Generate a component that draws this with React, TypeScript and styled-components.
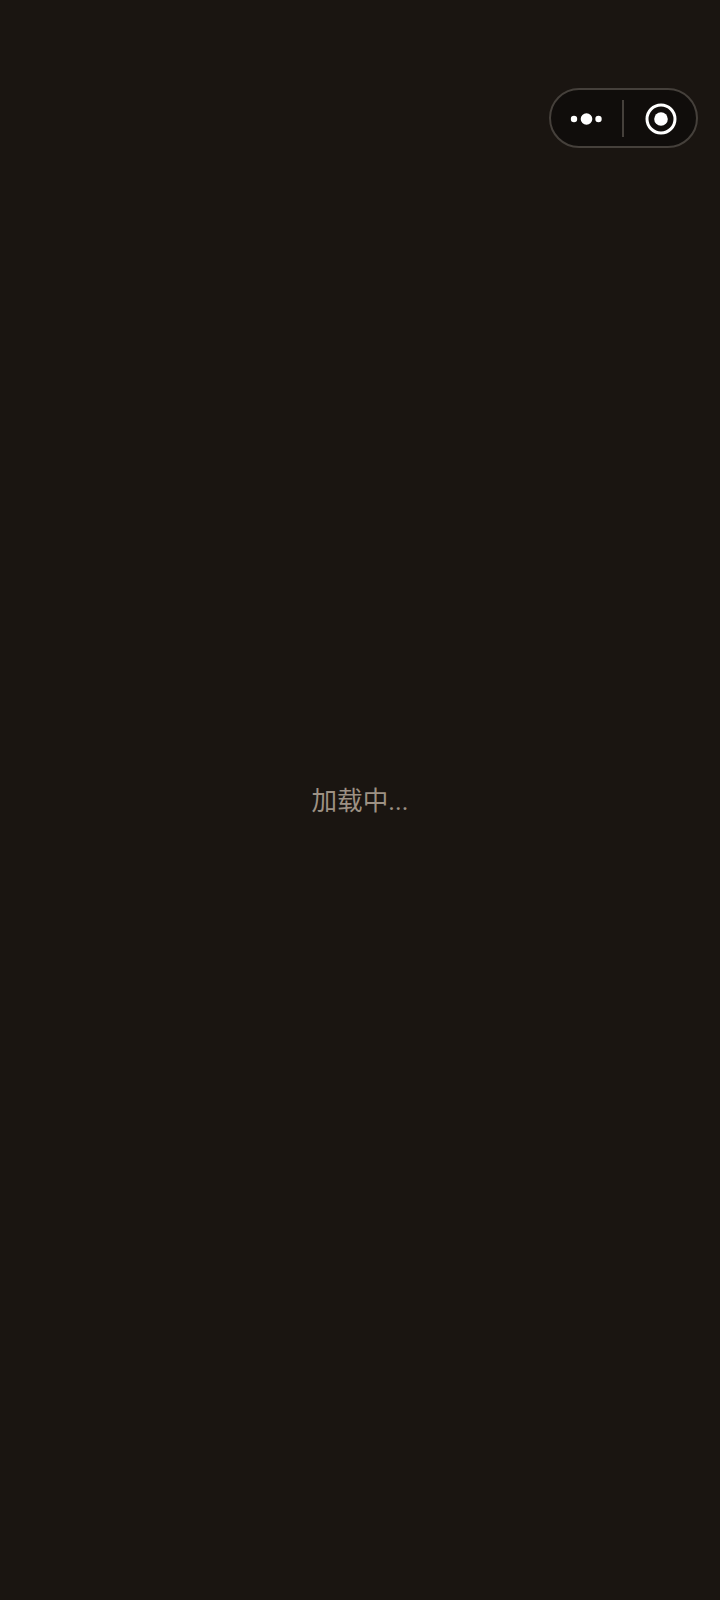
import React from "react";
import styled, { createGlobalStyle } from "styled-components";

const Global = createGlobalStyle`
  html, body { margin: 0; padding: 0; background: #1a1511; }
`;

const Page = styled.main`
  position: relative;
  width: 720px;
  height: 1600px;
  background: #1a1511;
  display: flex;
  align-items: center;
  justify-content: center;
  overflow: hidden;
`;

const LoadingText = styled.div`
  font-family: Roboto, "Noto Sans CJK SC", sans-serif;
  font-size: 25.6px;
  line-height: 36px;
  color: #9d9184;
  transform: translateY(1px);
`;

const Capsule = styled.div`
  position: absolute;
  top: 88px;
  right: 22px;
  box-sizing: border-box;
  width: 149px;
  height: 60px;
  padding-top: 1px;
  border: 2px solid #45403b;
  border-radius: 30px;
  background: #100d0b;
  display: flex;
  align-items: center;
`;

const CapsuleSlot = styled.div`
  flex: 1;
  display: flex;
  align-items: center;
  justify-content: center;
`;

const Divider = styled.div`
  width: 2px;
  height: 37px;
  background: #45403b;
  transform: translateX(-1px);
`;

export default function App() {
  return (
    <>
      <Global />
      <Page>
        <LoadingText>加载中...</LoadingText>
        <Capsule>
          <CapsuleSlot>
            <svg width="34" height="14" viewBox="0 0 34 14" aria-hidden="true">
              <circle cx="4" cy="7" r="3.2" fill="#fff" />
              <circle cx="16.5" cy="7" r="5.8" fill="#fff" />
              <circle cx="28.5" cy="7" r="3.2" fill="#fff" />
            </svg>
          </CapsuleSlot>
          <Divider />
          <CapsuleSlot>
            <svg width="34" height="32" viewBox="0 0 34 32" aria-hidden="true">
              <circle cx="18" cy="16" r="14" fill="none" stroke="#fff" strokeWidth="3" />
              <circle cx="18" cy="16" r="6.8" fill="#fff" />
            </svg>
          </CapsuleSlot>
        </Capsule>
      </Page>
    </>
  );
}
